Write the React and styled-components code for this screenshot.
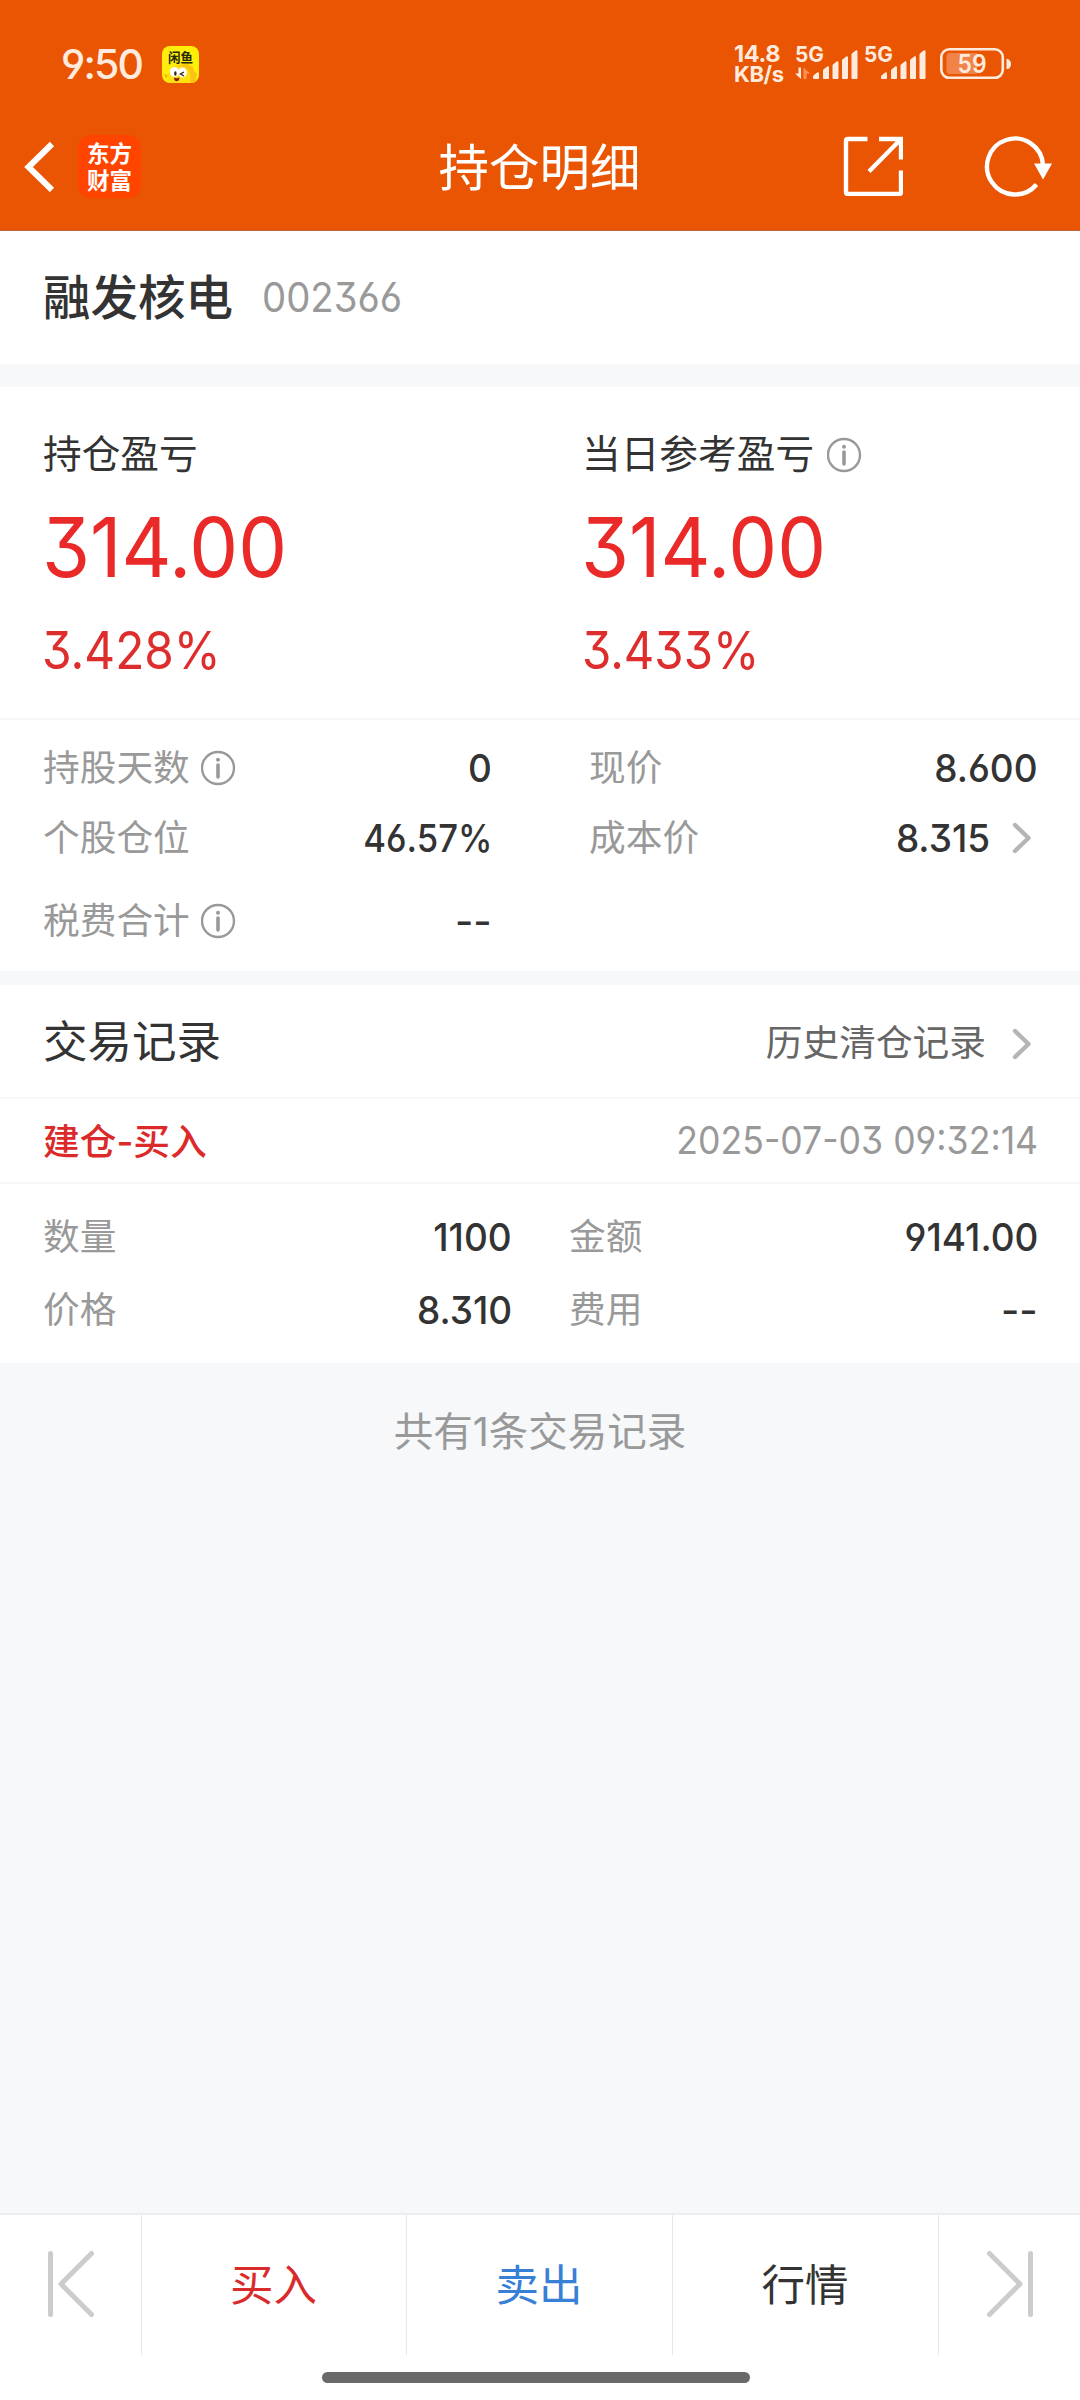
import React from 'react'
import styled, { createGlobalStyle } from 'styled-components'

const GlobalStyle = createGlobalStyle`
* { box-sizing: border-box; }
body {
  margin: 0;
  background-color: #f6f8fa;
  color: #333333;
  font-family: Inter, "Noto Sans CJK SC", sans-serif;
}
`
const Page = styled.div`
width: 1080px;
height: 2400px;
display: flex;
flex-direction: column;
overflow: hidden;
`
const Header = styled.header`
height: 231px;
background-color: #e95502;
border-bottom: 1px solid #b9673c;
color: white;
`
const StatusBar = styled.div`
height: 102px;
padding: 26px 68px 0 61px;
display: flex;
justify-content: space-between;
align-items: center;
color: #ffebdd;
`
const StatusSide = styled.div`
display: flex;
align-items: center;
`
const Clock = styled.div`
width: 101px;
font-size: 41px;
font-weight: 500;
line-height: 50px;
letter-spacing: -1.9px;
white-space: nowrap;
font-feature-settings: "cv04";
`
const Speed = styled.div`
width: 61px;
display: flex;
flex-direction: column;
font-weight: 700;
white-space: nowrap;
`
const SpeedLine = styled.span`
font-size: ${p => p.$size}px;
line-height: 20.5px;
letter-spacing: -0.4px;
`
const TitleBar = styled.div`
height: 128px;
padding: 0 28px 0 24px;
display: grid;
grid-template-columns: 300px 1fr 300px;
align-items: center;
`
const TitleLeft = styled.div`
display: flex;
align-items: center;
gap: 22px;
`
const TitleRight = styled.div`
display: flex;
justify-content: flex-end;
align-items: center;
gap: 81px;
`
const Title = styled.h1`
margin: 0;
padding: 3px 0 0 3px;
font-size: 50.5px;
font-weight: 400;
line-height: 60px;
text-align: center;
`
const AppBadge = styled.div`
width: 63px;
height: 63px;
border-radius: 13px;
background-color: #ff4400;
display: flex;
flex-direction: column;
justify-content: center;
align-items: center;
font-family: "Noto Sans CJK SC", sans-serif;
font-size: 22.5px;
font-weight: 700;
line-height: 27px;
`
const StockBar = styled.div`
height: 133px;
padding: 0 43px;
display: flex;
align-items: center;
gap: 29px;
background-color: white;
`
const StockName = styled.div`
font-size: 47.5px;
font-weight: 500;
line-height: 60px;
`
const Gap = styled.div`
height: ${p => p.$height}px;
flex-shrink: 0;
`
const Num = styled.span`
display: inline-block;
margin: 0 ${p => p.$origin ? 0 : -1}px 0 ${p => p.$shift || 0}px;
font-size: ${p => p.$size || 38.5}px;
font-weight: ${p => p.$weight || 400};
color: ${p => p.$color || '#333333'};
line-height: 1.2;
white-space: nowrap;
font-feature-settings: "cv03", "cv04", "cv09";
transform: scaleX(${p => p.$stretch || 0.96});
transform-origin: ${p => p.$origin || 'right'};
`
const Text = styled.span`
padding-bottom: ${p => p.$lift || 0}px;
line-height: 1.2;
`
const Profit = styled.div`
height: 333px;
padding-left: 43px;
display: grid;
grid-template-columns: 539px 1fr;
background-color: white;
border-bottom: 2px solid #f8f8f8;
`
const ProfitCell = styled.div`
padding-top: 43px;
display: flex;
flex-direction: column;
align-items: flex-start;
`
const ProfitLabel = styled.div`
height: 50px;
display: flex;
align-items: center;
gap: 13px;
font-size: 38.7px;
`
const ProfitAmount = styled.div`
height: 137px;
display: flex;
align-items: center;
`
const ProfitRate = styled.div`
height: 67px;
display: flex;
align-items: center;
`
const Details = styled.div`
height: 251px;
padding: 13px 43px 0;
display: grid;
grid-template-columns: 448px 448px;
grid-template-rows: 70px 70px 96px;
column-gap: 98px;
background-color: white;
`
const Field = styled.div`
height: 70px;
display: flex;
justify-content: space-between;
align-items: center;
margin-top: ${p => p.$top || 0}px;
`
const Label = styled.div`
display: flex;
align-items: center;
gap: 11px;
font-size: 36.7px;
color: #999999;
white-space: nowrap;
`
const Value = styled.div`
padding-right: 5px;
display: flex;
align-items: center;
gap: 23px;
`
const SectionHead = styled.div`
height: 114px;
padding: 0 48px 0 43px;
display: flex;
justify-content: space-between;
align-items: center;
background-color: white;
border-bottom: 2px solid #f8f8f8;
`
const SectionTitle = styled.div`
padding-bottom: 5px;
font-size: 44.5px;
font-weight: 400;
`
const HistoryLink = styled.div`
padding-top: 5px;
display: flex;
align-items: center;
gap: 26px;
font-size: 36.7px;
color: #666666;
`
const RecordHead = styled.div`
height: 85px;
padding: 0 43px;
display: flex;
justify-content: space-between;
align-items: center;
background-color: white;
border-bottom: 2px solid #f8f8f8;
`
const RecordType = styled.div`
padding-bottom: 4px;
font-size: 36.7px;
font-weight: 500;
color: #dc2a2a;
`
const RecordBody = styled.div`
height: 179px;
padding: 18px 43px 0;
display: grid;
grid-template-columns: 468px 468px;
grid-template-rows: 73px 73px;
column-gap: 58px;
background-color: white;
`
const Empty = styled.div`
flex: 1;
padding-top: 41px;
font-size: 39.5px;
line-height: 56px;
text-align: center;
color: #999999;
`
const Footer = styled.footer`
height: 187px;
background-color: white;
border-top: 2px solid #ededed;
`
const Tabs = styled.div`
height: 140px;
display: grid;
grid-template-columns: 142px 265px 266px 266px 141px;
`
const Tab = styled.div`
padding: 0 ${p => p.$icon ? 0 : 1}px ${p => p.$icon ? 3 : 5}px 0;
display: flex;
justify-content: center;
align-items: center;
font-size: 43.5px;
color: ${p => p.$color || '#333333'};
border-right: ${p => p.$last ? 'none' : '1px solid #e8e8e8'};
`
const HomeBar = styled.div`
width: 428px;
height: 11px;
margin: 17px 0 0 322px;
border-radius: 6px;
background-color: #696969;
`
const Battery = styled.svg`
margin-left: 9px;
`

const RED = '#e92a29'
const DARK_RED = '#dd2e2d'

// x offset and height of each signal bar
const SIGNAL = [[0, 7], [10, 13], [19.5, 18], [29, 23], [38.5, 29]]

function FishIcon() {
  return (
    <svg width="37" height="37" viewBox="0 0 37 37">
      <defs>
        <clipPath id="fishBox"><rect width="37" height="37" rx="8" /></clipPath>
      </defs>
      <g clipPath="url(#fishBox)">
        <rect width="37" height="37" fill="#ffee0a" />
        <path d="M6 37C5 27 9 20 17 19l9-1 2 2 3 1 1 4 3 3-1 4 1 5z" fill="#fbc313" />
        <path d="M6 37C5 27 9 20 17 20c8 0 13 5 11 17z" fill="#ffdf10" />
        <path d="M2 28l4 1-2 4z" fill="#f5b800" />
        <ellipse cx="12.5" cy="26" rx="4.7" ry="5" fill="white" />
        <ellipse cx="20.5" cy="26.5" rx="4.4" ry="5" fill="white" />
        <ellipse cx="13.4" cy="27.5" rx="1.2" ry="2.2" fill="#30220a" />
        <path d="M22 26l-3.5 2 3.5 2" fill="none" stroke="#30220a" strokeWidth="1.4" />
        <path d="M12 31.5c2 1.2 4 1 5.5-.3 0 3-1.5 4.3-3 4.1-1.5-.2-2.5-1.5-2.5-3.8z" fill="#8c1710" />
        <text x="6" y="16" fontSize="12.6" fontWeight="700" fontFamily="Noto Sans CJK SC, sans-serif" fill="#26260a">闲鱼</text>
      </g>
    </svg>
  )
}

function SignalIcon({ data }) {
  return (
    <svg width="68" height="50" viewBox="0 -4 68 50">
      <text x={data ? 0 : 1} y="19" fontSize="22" fontWeight="700" textLength="29" lengthAdjust="spacingAndGlyphs" fontFamily="Inter, sans-serif" fill="#ffebdd">5G</text>
      {data && <path d="M6 24.500V36L0 30.500h3.500v-6z" fill="#ffebdd" />}
      {data && <path d="M8.500 36V24.500l6.500 6h-3.500V36z" fill="#ff9054" />}
      {SIGNAL.map(([x, h]) => (
        <path key={x} transform={`translate(${18 + x} ${36 - h})`} d={`M0 4.500Q0 3.500 1 3L4.500.3Q6 0 6 1.500V${h - 1}Q6 ${h} 5 ${h}H1Q0 ${h} 0 ${h - 1}z`} fill="#ffebdd" />
      ))}
    </svg>
  )
}

function BatteryIcon() {
  return (
    <Battery width="72" height="32" viewBox="0 0 72 32">
      <rect x="1.300" y="1.300" width="61.500" height="28.500" rx="8" fill="none" stroke="#ffebdd" strokeWidth="2.600" />
      <path d="M10 5h27v21H10q-3.500 0-3.500-3.500v-14Q6.500 5 10 5z" fill="#f18349" />
      <path d="M66.500 11h1.500q3 1.500 3 5t-3 5h-1.500z" fill="#ffebdd" />
      <text x="17.500" y="25" fontSize="25" fontWeight="600" textLength="29" lengthAdjust="spacingAndGlyphs" fontFamily="Inter, sans-serif" fill="#ffebdd">59</text>
    </Battery>
  )
}

function BackIcon() {
  return (
    <svg width="32" height="52" viewBox="0 0 32 52">
      <path d="M28 4L4.500 27 28 50" fill="none" stroke="white" strokeWidth="6" />
    </svg>
  )
}

function ShareIcon() {
  return (
    <svg width="60" height="60" viewBox="0 0 60 60" fill="none" stroke="white" strokeWidth="4.400">
      <path d="M24.500 3H5Q3 3 3 5V56Q3 58 5 58H56Q58 58 58 56V34.500" />
      <path d="M36 3H58V23.500M57 4L26 35.500" />
    </svg>
  )
}

function RefreshIcon() {
  return (
    <svg width="68" height="62" viewBox="0 0 68 62">
      <path d="M52.500 49.500A28 28 0 1 1 59 30" fill="none" stroke="white" strokeWidth="4.400" />
      <path d="M50 28.500h18l-9 16z" fill="white" />
    </svg>
  )
}

function InfoIcon() {
  return (
    <svg width="36" height="36" viewBox="0 0 36 36">
      <circle cx="17" cy="18" r="16" fill="none" stroke="#999999" strokeWidth="2.400" />
      <circle cx="17" cy="9.800" r="2" fill="#999999" />
      <path d="M17 15v12" stroke="#999999" strokeWidth="3.600" strokeLinecap="round" />
    </svg>
  )
}

function ArrowIcon() {
  return (
    <svg width="20" height="32" viewBox="0 0 20 32">
      <path d="M3 3L16.500 16 3 29" fill="none" stroke="#b5b5b5" strokeWidth="4.400" strokeLinecap="round" strokeLinejoin="round" />
    </svg>
  )
}

function SkipIcon({ next }) {
  return (
    <svg width="48" height="68" viewBox="0 0 48 68">
      <g transform={next ? 'translate(48 0) scale(-1 1)' : undefined} fill="none" stroke="#cccccc" strokeWidth="5" strokeLinecap="round" strokeLinejoin="round">
        <path d="M3.500 3.500v61" />
        <path d="M44.500 3.500L14 34l30.500 30.500" />
      </g>
    </svg>
  )
}

function App() {
  return (
    <Page>
      <GlobalStyle />
      <Header>
        <StatusBar>
          <StatusSide><Clock>9:50</Clock><FishIcon /></StatusSide>
          <StatusSide>
            <Speed>
              <SpeedLine $size={23.5}>14.8</SpeedLine>
              <SpeedLine $size={22}>KB/s</SpeedLine>
            </Speed>
            <SignalIcon data />
            <SignalIcon />
            <BatteryIcon />
          </StatusSide>
        </StatusBar>
        <TitleBar>
          <TitleLeft>
            <BackIcon />
            <AppBadge><span>东方</span><span>财富</span></AppBadge>
          </TitleLeft>
          <Title>持仓明细</Title>
          <TitleRight><ShareIcon /><RefreshIcon /></TitleRight>
        </TitleBar>
      </Header>

      <StockBar>
        <StockName>融发核电</StockName>
        <Num $size={41} $color="#999999" $origin="left" $stretch={0.935}>002366</Num>
      </StockBar>
      <Gap $height={23} />

      <Profit>
        <ProfitCell>
          <ProfitLabel><Text $lift={2}>持仓盈亏</Text></ProfitLabel>
          <ProfitAmount><Num $size={82} $color={RED} $origin="left" $stretch={0.945} $shift={-1}>314.00</Num></ProfitAmount>
          <ProfitRate><Num $size={52.5} $color={DARK_RED} $origin="left" $stretch={0.91} $shift={-1}>3.428%</Num></ProfitRate>
        </ProfitCell>
        <ProfitCell>
          <ProfitLabel><Text $lift={2}>当日参考盈亏</Text><InfoIcon /></ProfitLabel>
          <ProfitAmount><Num $size={82} $color={RED} $origin="left" $stretch={0.945} $shift={-1}>314.00</Num></ProfitAmount>
          <ProfitRate><Num $size={52.5} $color={DARK_RED} $origin="left" $stretch={0.9}>3.433%</Num></ProfitRate>
        </ProfitCell>
      </Profit>

      <Details>
        <Field><Label><Text>持股天数</Text><InfoIcon /></Label><Num $weight={500}>0</Num></Field>
        <Field><Label><Text>现价</Text></Label><Num $weight={500}>8.600</Num></Field>
        <Field><Label><Text>个股仓位</Text></Label><Num $weight={500} $stretch={0.9}>46.57%</Num></Field>
        <Field>
          <Label><Text>成本价</Text></Label>
          <Value><Num $weight={500}>8.315</Num><ArrowIcon /></Value>
        </Field>
        <Field $top={13}><Label><Text>税费合计</Text><InfoIcon /></Label><Num $weight={500} $stretch={1.03}>--</Num></Field>
      </Details>
      <Gap $height={14} />

      <SectionHead>
        <SectionTitle>交易记录</SectionTitle>
        <HistoryLink><Text>历史清仓记录</Text><ArrowIcon /></HistoryLink>
      </SectionHead>
      <RecordHead>
        <RecordType>建仓-买入</RecordType>
        <Num $color="#999999" $stretch={0.925}>2025-07-03 09:32:14</Num>
      </RecordHead>
      <RecordBody>
        <Field><Label><Text>数量</Text></Label><Num $weight={500}>1100</Num></Field>
        <Field><Label><Text>金额</Text></Label><Num $weight={500}>9141.00</Num></Field>
        <Field><Label><Text>价格</Text></Label><Num $weight={500}>8.310</Num></Field>
        <Field><Label><Text>费用</Text></Label><Num $weight={500} $stretch={1.03}>--</Num></Field>
      </RecordBody>

      <Empty>共有1条交易记录</Empty>

      <Footer>
        <Tabs>
          <Tab $icon><SkipIcon /></Tab>
          <Tab $color="#d92b2b">买入</Tab>
          <Tab $color="#387fd6">卖出</Tab>
          <Tab>行情</Tab>
          <Tab $icon $last><SkipIcon next /></Tab>
        </Tabs>
        <HomeBar />
      </Footer>
    </Page>
  )
}

export default App
